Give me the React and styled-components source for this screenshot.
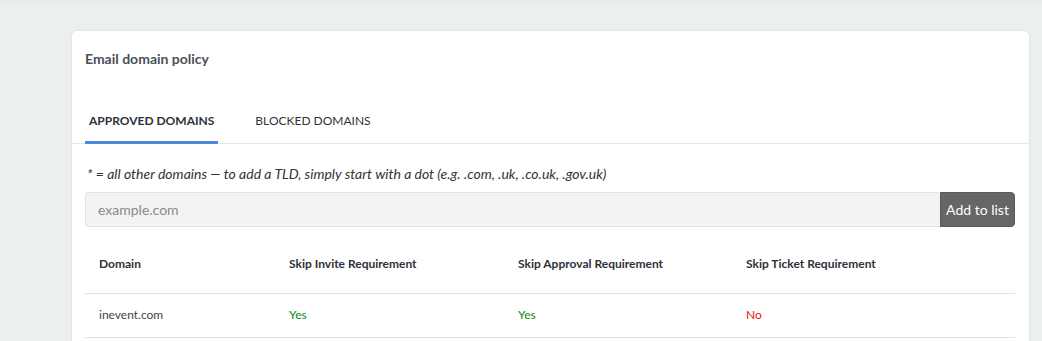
import React from 'react';
import styled, { createGlobalStyle } from 'styled-components';

const GlobalStyle = createGlobalStyle`
  html, body {
    margin: 0;
    padding: 0;
    background: #eceff0;
    font-family: Lato, "Open Sans", sans-serif;
    overflow: hidden;
  }
`;

const Page = styled.div`
  min-height: 341px;
  padding: 30px 12px 0 71px;
  background: linear-gradient(#e6e9ea, #eceff0 6px);
`;

const Card = styled.div`
  background: #fff;
  border: 1px solid #e3e6e8;
  border-bottom: none;
  border-radius: 6px 6px 0 0;
  min-height: 320px;
`;

const Title = styled.h2`
  margin: 0;
  padding: 19px 13px 0;
  font-size: 14px;
  font-weight: 700;
  color: #4b5057;
  line-height: 18px;
`;

const Tabs = styled.div`
  display: flex;
  margin-top: 45px;
  padding: 0 13px;
  border-bottom: 1px solid #e8e8e8;
`;

const Tab = styled.div`
  padding: 0 4px 12px;
  margin-right: 33px;
  font-size: 12px;
  line-height: 16px;
  text-transform: uppercase;
  font-weight: ${p => (p.$active ? 700 : 400)};
  color: ${p => (p.$active ? '#2d3238' : '#333')};
  border-bottom: 3px solid ${p => (p.$active ? '#4a89dc' : 'transparent')};
  margin-bottom: -1px;
`;

const Body = styled.div`
  padding: 21px 14px 0 13px;
`;

const Hint = styled.p`
  margin: 0 0 9px 2px;
  font-size: 14px;
  font-style: italic;
  color: #333;
  line-height: 18px;
`;

const InputRow = styled.div`
  display: flex;
  height: 35px;
`;

const Input = styled.input`
  flex: 1;
  min-width: 0;
  box-sizing: border-box;
  height: 35px;
  padding: 0 12px;
  border: 1px solid #e2e2e2;
  border-right: none;
  border-radius: 4px 0 0 4px;
  background: #f3f3f3;
  font-family: inherit;
  font-size: 14px;
  color: #333;
  outline: none;
  &::placeholder {
    color: #8a8a8a;
  }
`;

const AddButton = styled.button`
  box-sizing: border-box;
  width: 75px;
  height: 35px;
  border: 1px solid #5a5a5a;
  border-radius: 0 4px 4px 0;
  background: #666;
  color: #fff;
  font-family: inherit;
  font-size: 14px;
  padding: 0;
`;

const Table = styled.div`
  margin-top: 7px;
  display: grid;
  grid-template-columns: 190px 229px 228px 1fr;
`;

const HeadCell = styled.div`
  padding: 22px 14px 22px;
  font-size: 12px;
  font-weight: 700;
  color: #2d3238;
  line-height: 15px;
  border-bottom: 1px solid #e2e2e2;
`;

const Cell = styled.div`
  padding: 13px 14px 14px;
  font-size: 12px;
  line-height: 16px;
  color: ${p => p.$color || '#444'};
  border-bottom: 1px solid #e2e2e2;
`;

const domains = [
  { name: 'inevent.com', invite: true, approval: true, ticket: false },
];

const YesNo = ({ value }) => (
  <Cell $color={value ? '#11860f' : '#e80f0f'}>{value ? 'Yes' : 'No'}</Cell>
);

export default function App() {
  return (
    <>
      <GlobalStyle />
      <Page>
        <Card>
          <Title>Email domain policy</Title>
          <Tabs>
            <Tab $active>Approved domains</Tab>
            <Tab>Blocked domains</Tab>
          </Tabs>
          <Body>
            <Hint>
              * = all other domains — to add a TLD, simply start with a dot (e.g. .com, .uk, .co.uk, .gov.uk)
            </Hint>
            <InputRow>
              <Input placeholder="example.com" />
              <AddButton>Add to list</AddButton>
            </InputRow>
            <Table>
              <HeadCell>Domain</HeadCell>
              <HeadCell>Skip Invite Requirement</HeadCell>
              <HeadCell>Skip Approval Requirement</HeadCell>
              <HeadCell>Skip Ticket Requirement</HeadCell>
              {domains.map(d => (
                <React.Fragment key={d.name}>
                  <Cell>{d.name}</Cell>
                  <YesNo value={d.invite} />
                  <YesNo value={d.approval} />
                  <YesNo value={d.ticket} />
                </React.Fragment>
              ))}
            </Table>
          </Body>
        </Card>
      </Page>
    </>
  );
}
